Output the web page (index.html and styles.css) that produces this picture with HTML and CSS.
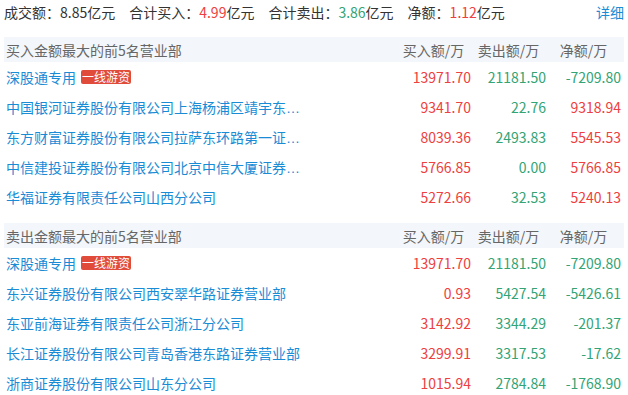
FILE: index.html
```html
<!DOCTYPE html>
<html lang="zh-CN">
<head>
<meta charset="utf-8">
<link rel="stylesheet" href="styles.css">
</head>
<body>
<div class="page">
  <div class="summary">
    <span class="item">成交额：8.85亿元</span>
    <span class="item">合计买入：<span class="up">4.99</span>亿元</span>
    <span class="item">合计卖出：<span class="down">3.86</span>亿元</span>
    <span class="item">净额：<span class="up">1.12</span>亿元</span>
    <a class="more">详细</a>
  </div>

  <div class="section">
    <div class="row head">
      <div class="name">买入金额最大的前5名营业部</div>
      <div class="col">买入额/万</div>
      <div class="col">卖出额/万</div>
      <div class="col">净额/万</div>
    </div>
    <div class="row">
      <div class="name"><span class="txt">深股通专用</span><span class="badge">一线游资</span></div>
      <div class="num up">13971.70</div><div class="num down">21181.50</div><div class="num down">-7209.80</div>
    </div>
    <div class="row">
      <div class="name"><span class="txt">中国银河证券股份有限公司上海杨浦区靖宇东路证券营业部</span></div>
      <div class="num up">9341.70</div><div class="num down">22.76</div><div class="num up">9318.94</div>
    </div>
    <div class="row">
      <div class="name"><span class="txt">东方财富证券股份有限公司拉萨东环路第一证券营业部</span></div>
      <div class="num up">8039.36</div><div class="num down">2493.83</div><div class="num up">5545.53</div>
    </div>
    <div class="row">
      <div class="name"><span class="txt">中信建投证券股份有限公司北京中信大厦证券营业部</span></div>
      <div class="num up">5766.85</div><div class="num down">0.00</div><div class="num up">5766.85</div>
    </div>
    <div class="row">
      <div class="name"><span class="txt">华福证券有限责任公司山西分公司</span></div>
      <div class="num up">5272.66</div><div class="num down">32.53</div><div class="num up">5240.13</div>
    </div>
  </div>

  <div class="section">
    <div class="row head">
      <div class="name">卖出金额最大的前5名营业部</div>
      <div class="col">买入额/万</div>
      <div class="col">卖出额/万</div>
      <div class="col">净额/万</div>
    </div>
    <div class="row">
      <div class="name"><span class="txt">深股通专用</span><span class="badge">一线游资</span></div>
      <div class="num up">13971.70</div><div class="num down">21181.50</div><div class="num down">-7209.80</div>
    </div>
    <div class="row">
      <div class="name"><span class="txt">东兴证券股份有限公司西安翠华路证券营业部</span></div>
      <div class="num up">0.93</div><div class="num down">5427.54</div><div class="num down">-5426.61</div>
    </div>
    <div class="row">
      <div class="name"><span class="txt">东亚前海证券有限责任公司浙江分公司</span></div>
      <div class="num up">3142.92</div><div class="num down">3344.29</div><div class="num down">-201.37</div>
    </div>
    <div class="row">
      <div class="name"><span class="txt">长江证券股份有限公司青岛香港东路证券营业部</span></div>
      <div class="num up">3299.91</div><div class="num down">3317.53</div><div class="num down">-17.62</div>
    </div>
    <div class="row">
      <div class="name"><span class="txt">浙商证券股份有限公司山东分公司</span></div>
      <div class="num up">1015.94</div><div class="num down">2784.84</div><div class="num down">-1768.90</div>
    </div>
  </div>
</div>
</body>
</html>
```

FILE: styles.css
```css
* { box-sizing: border-box; }
body {
  margin: 0;
  background: #fff;
  font-family: "Noto Sans CJK SC", "Noto Sans", sans-serif;
  font-size: 14px;
  color: #333;
}
.page {
  width: 628px;
  padding: 0 4px;
}
.summary {
  display: flex;
  align-items: center;
  height: 24px;
  line-height: 24px;
  margin-bottom: 13px;
  white-space: nowrap;
}
.summary .item { margin-right: 14px; }
.summary .more {
  margin-left: auto;
  color: #1a8bd5;
  cursor: pointer;
}
.up { color: #ee4040; }
.down { color: #32a475; }
.section { margin-bottom: 11px; }
.row {
  display: grid;
  grid-template-columns: 1fr 75px 75px 75px;
  align-items: center;
  height: 30px;
  padding: 0 3px 0 2px;
}
.row.head {
  height: 25px;
  background: #f3f6fa;
  color: #666;
}
.row.head .col { text-align: center; }
.name {
  display: flex;
  align-items: center;
  min-width: 0;
  white-space: nowrap;
}
.txt {
  font-family: "Liberation Sans", "Noto Sans CJK SC", sans-serif;
  color: #1a8bd5;
  max-width: 294px;
  overflow: hidden;
  text-overflow: ellipsis;
}
.badge {
  margin-left: 5px;
  background: #e04b3a;
  color: #fff;
  font-size: 12px;
  line-height: 14px;
  padding: 0 1px;
  border-radius: 2px;
}
.num { text-align: right; }
```
